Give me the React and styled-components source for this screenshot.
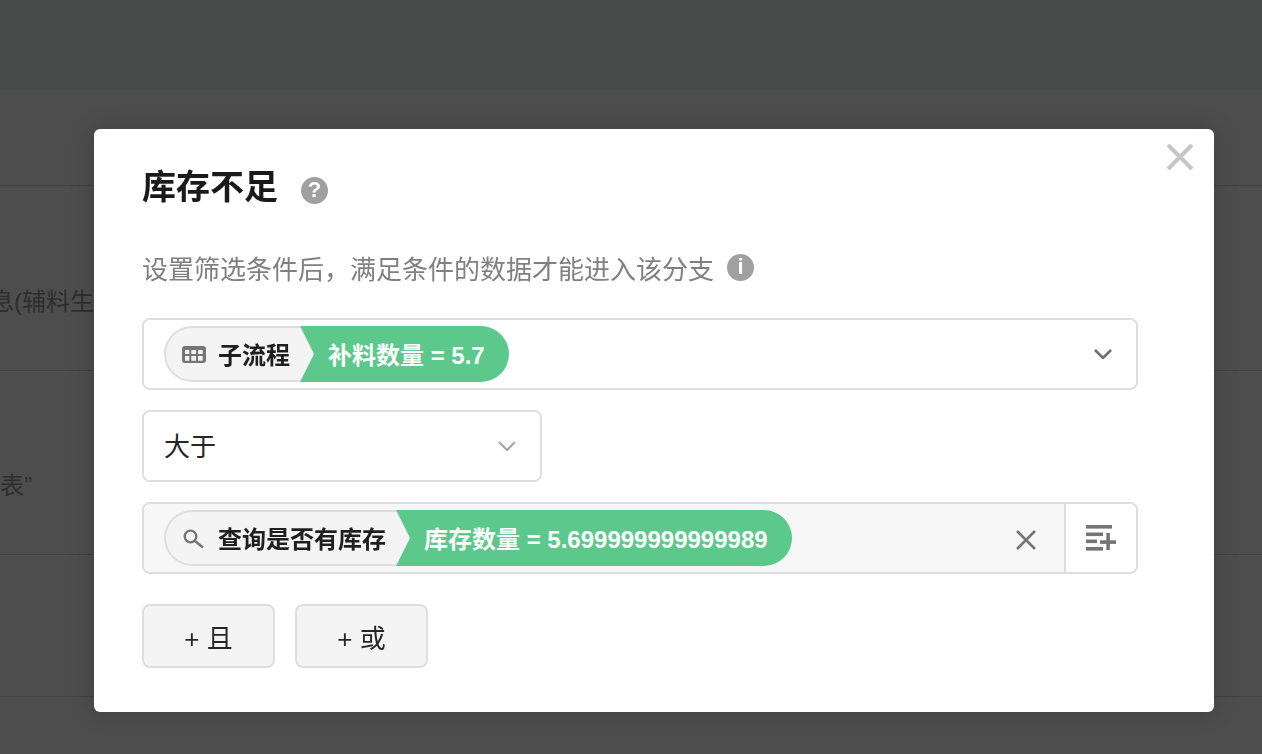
import React from 'react';
import styled, { createGlobalStyle } from 'styled-components';

const FONT = '"Liberation Sans", "Noto Sans CJK SC", sans-serif';

const Global = createGlobalStyle`
  html, body { margin: 0; padding: 0; height: 100%; background: #4d4d4d; overflow: hidden; }
  * { box-sizing: border-box; }
  body { font-family: ${FONT}; }
`;

const Page = styled.div`
  height: 754px;
  display: flex;
  flex-direction: column;
  overflow: hidden;
`;
const TopBar = styled.div`
  height: 90px;
  flex: none;
  background: #474b4a;
`;
const BgRow = styled.div`
  height: ${p => p.$h}px;
  flex: none;
  width: 94px;
  padding: 42px ${p => p.$pr || 0}px 0 0;
  display: flex;
  align-items: center;
  justify-content: flex-end;
  overflow: hidden;
  white-space: nowrap;
  font-size: 24px;
  color: #2e2e2e;
`;
const Divider = styled.div`
  height: 1px;
  flex: none;
  background: #414141;
`;

const Overlay = styled.div`
  position: fixed;
  inset: 0;
  padding: 129px 48px 42px 94px;
  display: flex;
  align-items: flex-start;
`;
const Modal = styled.div`
  position: relative;
  width: 1120px;
  height: 583px;
  background: #fff;
  border-radius: 6px;
  box-shadow: 0 0 24px rgba(0, 0, 0, 0.18);
  padding: 40px 76px 44px 48px;
  display: flex;
  flex-direction: column;
`;
const CloseBtn = styled.div`
  position: absolute;
  top: 12px;
  right: 18px;
  width: 32px;
  height: 32px;
  color: #c6c6c6;
`;
const TitleRow = styled.div`
  display: flex;
  align-items: center;
  gap: 23px;
  height: 42px;
`;
const Title = styled.div`
  font-size: 34px;
  font-weight: 700;
  color: #1a1a1a;
  line-height: 42px;
  margin-bottom: 6px;
`;
const Hint = styled.div`
  display: flex;
  align-items: center;
  gap: 13px;
  margin-top: 38px;
  height: 36px;
  font-size: 26px;
  color: #808080;
`;
const RoundIcon = styled.span`
  width: ${p => p.$s}px;
  height: ${p => p.$s}px;
  flex: none;
  border-radius: 50%;
  background: #a0a0a0;
  color: #fff;
  display: flex;
  align-items: center;
  justify-content: center;
  font-family: "Liberation Sans", sans-serif;
  font-weight: 700;
  font-size: ${p => p.$f}px;
  line-height: 1;
`;
const Field = styled.div`
  display: flex;
  align-items: center;
  width: ${p => p.$w}px;
  height: ${p => p.$h}px;
  margin-top: ${p => p.$mt}px;
  border: 2px solid #dedede;
  border-radius: 8px;
  background: #fff;
  overflow: hidden;
`;
const FieldBody = styled.div`
  flex: 1;
  min-width: 0;
  height: 100%;
  display: flex;
  align-items: center;
  padding: 0 ${p => p.$pr}px 0 20px;
  background: ${p => (p.$muted ? '#f7f7f7' : '#fff')};
  font-size: 26px;
  color: #262626;
`;
const FieldText = styled.span`
  margin-bottom: 4px;
`;
const Chip = styled.div`
  display: flex;
  height: 56px;
  flex: none;
`;
const ChipLabel = styled.span`
  margin-bottom: 2px;
`;
const ChipLeft = styled.div`
  display: flex;
  align-items: center;
  height: 56px;
  width: ${p => p.$w}px;
  padding-left: 16px;
  gap: ${p => p.$gap}px;
  border: 2px solid #dedede;
  border-right: none;
  border-radius: 28px 0 0 28px;
  background: #f4f4f4;
  font-size: 24px;
  font-weight: 700;
  color: #1f1f1f;
  white-space: nowrap;
  svg { flex: none; }
`;
const ChipRight = styled.div`
  display: flex;
  align-items: center;
  height: 56px;
  padding: 0 24px 0 28px;
  margin-left: -14px;
  background: #5cc88b;
  color: #fff;
  font-size: 24px;
  font-weight: 700;
  white-space: pre;
  clip-path: path('${p => p.$clip}');
`;
const Spacer = styled.div`
  flex: 1;
`;
const ClearIcon = styled.span`
  display: flex;
  color: #757575;
  margin-top: 4px;
`;
const SideAction = styled.div`
  flex: none;
  width: 72px;
  height: 100%;
  border-left: 2px solid #dedede;
  background: #fff;
  display: flex;
  align-items: center;
  justify-content: center;
`;
const Buttons = styled.div`
  display: flex;
  gap: 20px;
  margin-top: 30px;
`;
const AddBtn = styled.div`
  width: 133px;
  height: 64px;
  display: flex;
  align-items: center;
  justify-content: center;
  border: 2px solid #dedede;
  border-radius: 8px;
  background: #f4f4f4;
  font-size: 26px;
  color: #262626;
`;

const Chevron = ({ color, sw = 2.2 }) => (
  <svg width="18" height="10" viewBox="0 0 18 10" fill="none" stroke={color} strokeWidth={sw}>
    <path d="M1 1l8 8 8-8" />
  </svg>
);

const TableIcon = () => (
  <svg width="24" height="17" viewBox="0 0 24 17">
    <path
      fillRule="evenodd"
      fill="#757575"
      d="M3 0h18a3 3 0 013 3v11a3 3 0 01-3 3H3a3 3 0 01-3-3V3a3 3 0 013-3zM3 4v4h4.300V4zM9.300 4v4H14V4zM16 4v4h4.700V4zM3 10v4.700h4.300V10zM9.300 10v4.700H14V10zM16 10v4.700h4.700V10z"
    />
  </svg>
);

const SearchIcon = () => (
  <svg width="22" height="22" viewBox="0 0 22 22" fill="none" stroke="#757575" strokeWidth="2.300">
    <circle cx="8.500" cy="9.500" r="5.800" />
    <path d="M13 14l8 6.500" />
  </svg>
);

const XIcon = ({ size, sw }) => (
  <svg width={size} height={size} viewBox="0 0 32 32" stroke="currentColor" strokeWidth={sw} fill="none">
    <path d="M4 4l24 24M28 4L4 28" />
  </svg>
);

const ListAdd = () => (
  <svg width="30" height="26" viewBox="0 0 30 26" fill="#757575">
    <rect x="0" y="0" width="26" height="3.600" />
    <rect x="0" y="7.500" width="17" height="3.600" />
    <rect x="0" y="14.500" width="11" height="3.600" />
    <rect x="0" y="22" width="17" height="3.600" />
    <rect x="20.300" y="8" width="3.600" height="17" />
    <rect x="14" y="15.300" width="16" height="3.600" />
  </svg>
);

export default function App() {
  return (
    <Page>
      <Global />
      <TopBar />
      <BgRow $h={95} />
      <Divider />
      <BgRow $h={184}>息(辅料生</BgRow>
      <Divider />
      <BgRow $h={183} $pr={62}>表”</BgRow>
      <Divider />
      <BgRow $h={141} />
      <Divider />
      <Overlay>
        <Modal>
          <CloseBtn><XIcon size={32} sw={4} /></CloseBtn>
          <TitleRow>
            <Title>库存不足</Title>
            <RoundIcon $s={27} $f={22}>?</RoundIcon>
          </TitleRow>
          <Hint>
            设置筛选条件后，满足条件的数据才能进入该分支
            <RoundIcon $s={27} $f={22}>i</RoundIcon>
          </Hint>
          <Field $w={996} $h={72} $mt={33}>
            <FieldBody $pr={24}>
              <Chip>
                <ChipLeft $w={150} $gap={12}><TableIcon /><ChipLabel>子流程</ChipLabel></ChipLeft>
                <ChipRight $clip="M0 0H181A28 28 0 01181 56H0L14 28Z"><ChipLabel>补料数量 = 5.7</ChipLabel></ChipRight>
              </Chip>
              <Spacer />
              <Chevron color="#6e6e6e" sw={2.6} />
            </FieldBody>
          </Field>
          <Field $w={400} $h={72} $mt={20}>
            <FieldBody $pr={24}>
              <FieldText>大于</FieldText>
              <Spacer />
              <Chevron color="#a6a6a6" />
            </FieldBody>
          </Field>
          <Field $w={996} $h={72} $mt={20}>
            <FieldBody $muted $pr={26}>
              <Chip>
                <ChipLeft $w={246} $gap={14}><SearchIcon /><ChipLabel>查询是否有库存</ChipLabel></ChipLeft>
                <ChipRight $clip="M0 0H368A28 28 0 01368 56H0L14 28Z"><ChipLabel>库存数量 = 5.699999999999989</ChipLabel></ChipRight>
              </Chip>
              <Spacer />
              <ClearIcon><XIcon size={24} sw={3.400} /></ClearIcon>
            </FieldBody>
            <SideAction><ListAdd /></SideAction>
          </Field>
          <Buttons>
            <AddBtn>+ 且</AddBtn>
            <AddBtn>+ 或</AddBtn>
          </Buttons>
        </Modal>
      </Overlay>
    </Page>
  );
}
